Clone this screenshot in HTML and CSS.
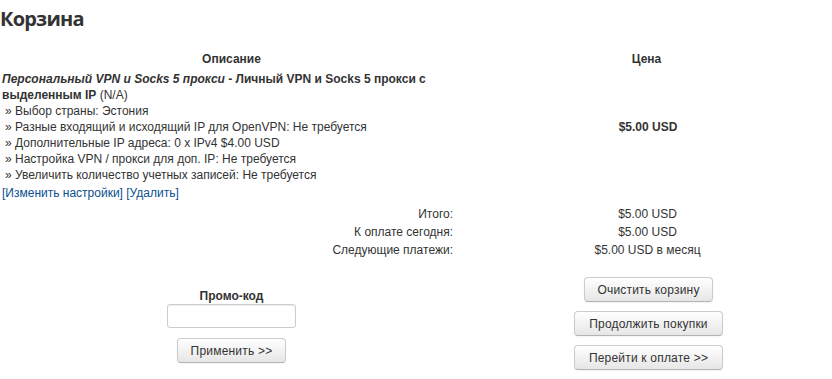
FILE: index.html
```html
<!DOCTYPE html>
<html lang="ru">
<head>
    <meta charset="UTF-8">
    <title>Корзина</title>
    <link rel="stylesheet" href="styles.css">
</head>
<body>
    <h1 class="page-title">Корзина</h1>

    <table class="cart">
        <thead>
            <tr>
                <th class="col-desc">Описание</th>
                <th class="col-price">Цена</th>
            </tr>
        </thead>
        <tbody>
            <tr>
                <td class="item-desc">
                    <div class="item-title"><strong><em>Персональный VPN и Socks 5 прокси</em> - Личный VPN и Socks 5 прокси с выделенным IP</strong> (N/A)</div>
                    <div class="item-opt">&raquo; Выбор страны: Эстония</div>
                    <div class="item-opt">&raquo; Разные входящий и исходящий IP для OpenVPN: Не требуется</div>
                    <div class="item-opt">&raquo; Дополнительные IP адреса: 0 x IPv4 $4.00 USD</div>
                    <div class="item-opt">&raquo; Настройка VPN / прокси для доп. IP: Не требуется</div>
                    <div class="item-opt">&raquo; Увеличить количество учетных записей: Не требуется</div>
                </td>
                <td class="item-price">$5.00 USD</td>
            </tr>
            <tr>
                <td class="item-links" colspan="2"><a href="#">[Изменить настройки]</a> <a href="#">[Удалить]</a></td>
            </tr>
        </tbody>
    </table>

    <table class="totals">
        <tr>
            <td class="total-label">Итого:</td>
            <td class="total-value">$5.00 USD</td>
        </tr>
        <tr>
            <td class="total-label">К оплате сегодня:</td>
            <td class="total-value">$5.00 USD</td>
        </tr>
        <tr>
            <td class="total-label">Следующие платежи:</td>
            <td class="total-value">$5.00 USD в месяц</td>
        </tr>
    </table>

    <table class="actions">
        <tr>
            <td class="promo">
                <div class="promo-title">Промо-код</div>
                <input type="text" class="promo-input">
                <button class="btn">Применить &gt;&gt;</button>
            </td>
            <td class="checkout">
                <button class="btn">Очистить корзину</button>
                <button class="btn">Продолжить покупки</button>
                <button class="btn">Перейти к оплате &gt;&gt;</button>
            </td>
        </tr>
    </table>
</body>
</html>
```

FILE: styles.css
```css
body {
    margin: 0;
    font-family: "Liberation Sans", Arial, sans-serif;
    font-size: 12px;
    color: #333;
    background: #fff;
}
.page-title {
    font-family: "Open Sans", sans-serif;
    font-size: 20px;
    font-weight: 700;
    letter-spacing: -0.8px;
    margin: 0;
    padding: 4px 0 0 0;
    line-height: 30px;
    color: #333;
}
table {
    border-collapse: collapse;
}
.cart {
    width: 830px;
    margin-top: 15px;
}
.cart th {
    font-weight: bold;
    text-align: center;
    padding: 2px;
    line-height: 16px;
}
.col-desc {
    width: 459px;
}
.cart .item-desc {
    padding: 2px 2px 1px;
    line-height: 16px;
    vertical-align: top;
}
.item-opt {
    padding-left: 3px;
}
.cart .item-links {
    padding: 1px 2px 2px 2px;
    line-height: 16px;
}
.item-links a {
    color: #0b4f8f;
    text-decoration: none;
}
.cart .item-price {
    text-align: center;
    font-weight: bold;
    vertical-align: middle;
    padding-left: 4px;
}
.totals {
    width: 830px;
    margin-top: 2px;
}
.totals td {
    padding: 2px;
    line-height: 14px;
}
.totals .total-label {
    width: 451px;
    text-align: right;
    padding-right: 0;
}
.totals .total-value {
    text-align: center;
    padding-left: 14px;
}
.actions {
    width: 830px;
    margin-top: 16px;
}
.actions td {
    vertical-align: middle;
    text-align: center;
    padding: 2px;
}
.actions .promo {
    width: 459px;
    padding-top: 6px;
}
.promo-title {
    font-weight: bold;
    line-height: 16px;
}
.promo-input {
    display: block;
    box-sizing: border-box;
    width: 129px;
    height: 24px;
    padding: 4px 5px;
    margin: 0 auto 10px;
    border: 1px solid #ccc;
    border-radius: 3px;
    box-shadow: inset 0 1px 1px rgba(0, 0, 0, 0.075);
    font: inherit;
}
.btn {
    display: block;
    margin: 0 auto;
    font-family: "Liberation Sans", Arial, sans-serif;
    font-size: 12px;
    letter-spacing: 0.2px;
    color: #333;
    padding: 0 13px;
    line-height: 14px;
    height: 25px;
    border: 1px solid #ccc;
    border-bottom-color: #b3b3b3;
    border-radius: 4px;
    background: linear-gradient(to bottom, #ffffff, #e6e6e6);
    box-shadow: inset 0 1px 0 rgba(255, 255, 255, 0.2), 0 1px 2px rgba(0, 0, 0, 0.05);
}
.checkout .btn {
    margin-bottom: 9px;
    padding-left: 12px;
    padding-right: 12px;
}
.checkout .btn:nth-child(2),
.checkout .btn:nth-child(3) {
    padding-left: 14px;
    padding-right: 14px;
}
.checkout .btn:last-child {
    margin-bottom: 0;
}
.actions .checkout {
    padding-left: 6px;
}
```
